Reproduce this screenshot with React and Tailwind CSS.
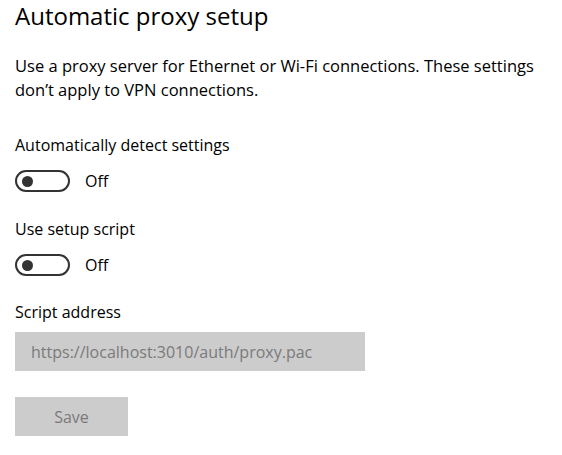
export default function App() {
  const Toggle = ({ label }) => (
    <div className="mt-[12px] flex items-center">
      <div className="flex h-[22px] w-[55px] items-center rounded-full border-2 border-[#333333] pl-[5px]">
        <div className="h-[11px] w-[11px] rounded-full bg-[#333333]" />
      </div>
      <span className="ml-[15px] text-[16px] text-black">{label}</span>
    </div>
  )

  return (
    <div className="h-[455px] w-[562px] bg-white px-[15px] text-black" style={{ fontFamily: '"Open Sans", sans-serif' }}>
      <h1 className="text-[24px] leading-[32px] font-normal">Automatic proxy setup</h1>
      <p className="mt-[22px] text-[16.5px] leading-[24px]">
        Use a proxy server for Ethernet or Wi-Fi connections. These settings don’t apply to VPN connections.
      </p>
      <div className="mt-[31px] text-[16px] leading-[24px]">Automatically detect settings</div>
      <Toggle label="Off" />
      <div className="mt-[24px] text-[16px] leading-[24px]">Use setup script</div>
      <Toggle label="Off" />
      <div className="mt-[23px] text-[16px] leading-[24px]">Script address</div>
      <div className="mt-[8px] flex h-[39px] w-[350px] items-center bg-[#cccccc] px-[16px] text-[16px] text-[#7a7a7a]">
        https://localhost:3010/auth/proxy.pac
      </div>
      <button className="mt-[26px] flex h-[39px] w-[113px] items-center justify-center bg-[#cccccc] text-[16px] text-[#7a7a7a]">
        Save
      </button>
    </div>
  )
}
